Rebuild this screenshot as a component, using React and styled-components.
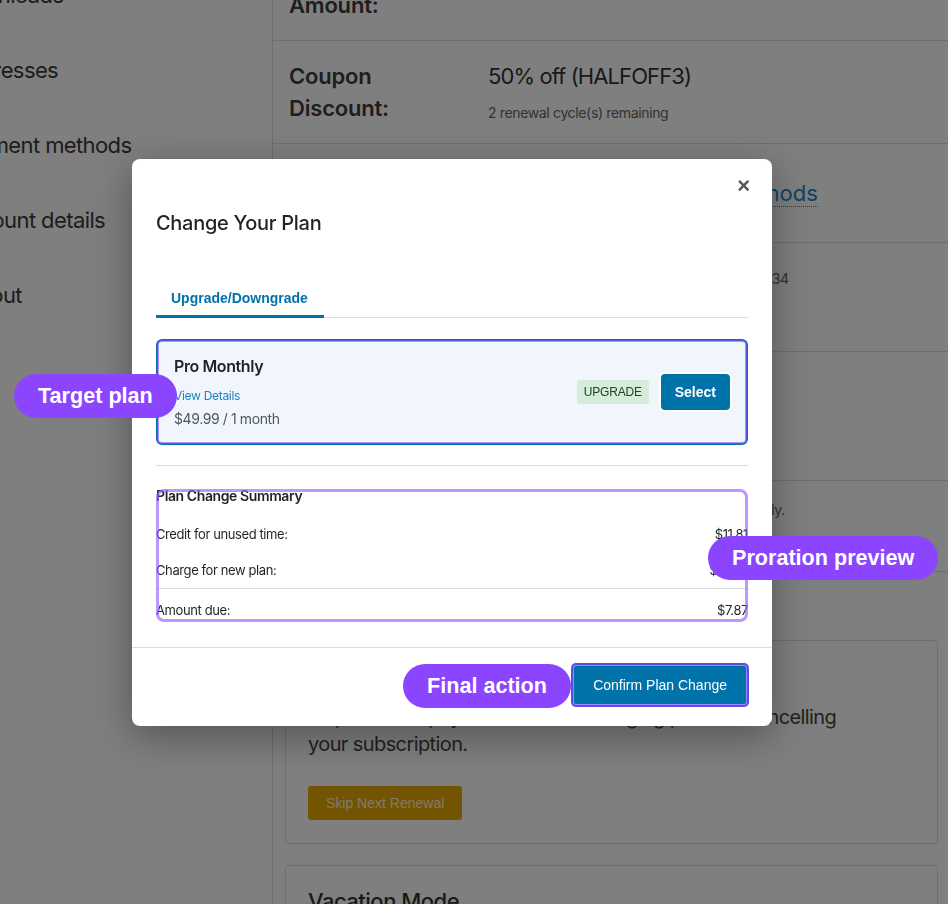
import styled, { createGlobalStyle } from "styled-components";

const GlobalStyle = createGlobalStyle`
  html, body {
    margin: 0;
    padding: 0;
    background: #fff;
    overflow: hidden;
  }
  body {
    font-family: Inter, "Noto Sans", sans-serif;
    color: #333;
  }
  * {
    box-sizing: border-box;
  }
`;

/* ---------- page behind the dialog ---------- */

const Page = styled.div`
  display: flex;
  margin: -62px 0 0 -47px;
  min-height: 1040px;
`;

const Sidebar = styled.nav`
  width: 320px;
  flex-shrink: 0;
  border-right: 1px solid #dcdcdc;
  padding-top: 20px;
`;

const NavItem = styled.div`
  font-size: 22px;
  line-height: 75px;
  color: #3a3a3a;
  letter-spacing: -0.6px;
  white-space: nowrap;
`;

const Main = styled.main`
  flex: 1;
  min-width: 0;
`;

const Row = styled.div`
  display: grid;
  grid-template-columns: 199px 1fr;
  align-items: center;
  padding: ${(p) => p.$pad || 19}px 0 ${(p) => p.$pad || 19}px 16px;
  border-bottom: 1px solid #dcdcdc;
`;

const Label = styled.div`
  font-size: 22px;
  line-height: 32px;
  font-weight: 600;
  color: #3c3c3c;
  letter-spacing: -0.2px;
`;

const Value = styled.div`
  font-size: 22px;
  line-height: ${(p) => p.$lh || 28}px;
  color: #333;
  white-space: nowrap;
  letter-spacing: -0.9px;
`;

const Small = styled.div`
  font-size: 14px;
  line-height: ${(p) => p.$lh || 20}px;
  margin-top: ${(p) => p.$mt || 0}px;
  color: #666;
  white-space: nowrap;
  letter-spacing: -0.35px;
`;

const PageLink = styled.a`
  color: #1a8ad0;
  text-decoration: none;
  letter-spacing: 0;
  border-bottom: 1px dotted #1a8ad0;
`;

const Card = styled.section`
  margin: ${(p) => p.$mt || 0}px 10px 0 12px;
  border: 1px solid #dcdcdc;
  border-radius: 4px;
  padding: ${(p) => p.$pt || 22}px 22px 23px;
`;

const CardTitle = styled.h3`
  margin: 0 0 11px;
  font-size: 22px;
  line-height: 30px;
  font-weight: 500;
  color: #333;
  letter-spacing: -0.5px;
`;

const CardText = styled.p`
  margin: 0;
  max-width: 560px;
  font-size: 20px;
  line-height: 27px;
  color: #444;
  letter-spacing: -0.6px;
`;

const SkipButton = styled.button`
  margin-top: 28px;
  height: 34px;
  padding: 0 18px;
  border: 0;
  border-radius: 3px;
  background: #e6a800;
  color: #fff6dc;
  font: 14px "Liberation Sans", Arial, sans-serif;
`;

const Overlay = styled.div`
  position: fixed;
  inset: 0;
  background: rgba(0, 0, 0, 0.5);
  z-index: 10;
`;

/* ---------- dialog ---------- */

const Modal = styled.div`
  position: fixed;
  top: 159px;
  left: 132px;
  width: 640px;
  background: #fff;
  border-radius: 8px;
  box-shadow: 0 10px 40px rgba(0, 0, 0, 0.35);
  z-index: 20;
  color: #1d2327;
`;

const ModalBody = styled.div`
  padding: 16px 24px 28px;
`;

const CloseRow = styled.div`
  display: flex;
  justify-content: flex-end;
`;

const CloseButton = styled.button`
  border: 0;
  background: none;
  padding: 0;
  margin-right: -2px;
  font: 700 22px/22px "Liberation Sans", Arial, sans-serif;
  color: #50575e;
`;

const Title = styled.h2`
  margin: 14px 0 0;
  font-size: 20px;
  line-height: 24px;
  font-weight: 500;
  letter-spacing: -0.3px;
`;

const TabBar = styled.div`
  display: flex;
  margin-top: 43px;
  border-bottom: 1px solid #dcdcde;
`;

const Tab = styled.div`
  padding: 12px 16px 8px 15px;
  margin-bottom: -1px;
  font: 700 14px/17px "Liberation Sans", Arial, sans-serif;
  color: #0073aa;
  border-bottom: 3px solid #0073aa;
`;

const PlanCard = styled.div`
  margin-top: 21px;
  display: flex;
  align-items: center;
  justify-content: space-between;
  padding: 15px 16px;
  background: #f0f6fc;
  border: 2px solid #0073aa;
  border-radius: 6px;
  outline: 2px solid rgba(139, 69, 255, 0.55);
  outline-offset: -3px;
`;

const PlanInfo = styled.div`
  display: flex;
  flex-direction: column;
`;

const PlanName = styled.div`
  font-size: 16px;
  line-height: 20px;
  font-weight: 600;
  letter-spacing: -0.4px;
`;

const DetailsLink = styled.a`
  margin-top: 12px;
  font-size: 12px;
  line-height: 16px;
  color: #2382c4;
  text-decoration: none;
  letter-spacing: -0.3px;
`;

const Price = styled.div`
  margin-top: 6px;
  font-size: 14px;
  line-height: 18px;
  color: #50575e;
  letter-spacing: -0.4px;
`;

const PlanActions = styled.div`
  display: flex;
  align-items: center;
  gap: 12px;
`;

const Badge = styled.span`
  height: 24px;
  padding: 0 7px;
  border-radius: 3px;
  background: #d5ecdb;
  color: #1e4620;
  font: 12px/24px "Liberation Sans", Arial, sans-serif;
  letter-spacing: -0.2px;
`;

const SelectButton = styled.button`
  height: 36px;
  padding: 0 14px;
  border: 0;
  border-radius: 4px;
  background: #0073aa;
  color: #fff;
  font: 700 14px "Liberation Sans", Arial, sans-serif;
  box-shadow: 0 0 0 2px #fff;
`;

const Divider = styled.hr`
  margin: 20px 0 0;
  border: 0;
  border-top: 1px solid #dcdcde;
`;

const Summary = styled.div`
  position: relative;
  padding-top: 21px;

  &::after {
    content: "";
    position: absolute;
    top: 23px;
    left: 0;
    right: 0;
    bottom: -3px;
    border: 3px solid rgba(150, 95, 255, 0.65);
    border-radius: 8px;
  }
`;

const SummaryTitle = styled.div`
  margin-bottom: 11px;
  font-size: 14px;
  line-height: 18px;
  font-weight: 600;
  letter-spacing: -0.4px;
`;

const SummaryRow = styled.div`
  display: flex;
  justify-content: space-between;
  padding: ${(p) => (p.$total ? "12px 0 0" : "9px 0")};
  border-bottom: ${(p) => (p.$rule ? "1px solid #dcdcde" : "0")};
  font-size: 13px;
  line-height: 18px;
  letter-spacing: -0.4px;
`;

const Footer = styled.div`
  display: flex;
  justify-content: flex-end;
  padding: 18px 26px 22px;
  border-top: 1px solid #dcdcde;
`;

const ConfirmButton = styled.button`
  height: 38px;
  padding: 0 19px;
  border: 0;
  border-radius: 2px;
  background: #0073aa;
  color: #fff;
  font: 14px "Liberation Sans", Arial, sans-serif;
  box-shadow: 0 0 0 1px #9a86ff, 0 0 0 3px #5b4de3;
`;

/* ---------- callouts ---------- */

const Pill = styled.div`
  position: fixed;
  top: ${(p) => p.$top}px;
  left: ${(p) => p.$left}px;
  height: 44px;
  padding: 0 24px;
  border-radius: 22px;
  background: #8b45ff;
  color: #fff;
  font: 700 21.6px/44px "Liberation Sans", Arial, sans-serif;
  white-space: nowrap;
  z-index: 30;
`;

export default function App() {
  return (
    <>
      <GlobalStyle />
      <Page>
        <Sidebar>
          <NavItem>Downloads</NavItem>
          <NavItem>Addresses</NavItem>
          <NavItem>Payment methods</NavItem>
          <NavItem>Account details</NavItem>
          <NavItem>Logout</NavItem>
        </Sidebar>
        <Main>
          <Row>
            <Label>
              Renewal
              <br />
              Amount:
            </Label>
            <Value>(was $49.99)</Value>
          </Row>
          <Row>
            <Label>
              Coupon
              <br />
              Discount:
            </Label>
            <div>
              <Value>50% off (HALFOFF3)</Value>
              <Small $mt={13}>2 renewal cycle(s) remaining</Small>
            </div>
          </Row>
          <Row $pad={17}>
            <Label>
              Payment
              <br />
              Method:
            </Label>
            <Value>
              <PageLink>Manage your payment methods</PageLink>
            </Value>
          </Row>
          <Row>
            <Label>Card:</Label>
            <div>
              <Small $lh={34}>Visa ending in 4242 — Card expires on 12/2034</Small>
              <Small $lh={18}>Billing address on file</Small>
              <Small $lh={18}>Default card</Small>
            </div>
          </Row>
          <Row>
            <Label>
              Shipping
              <br />
              Address:
            </Label>
            <div>
              <Value $lh={30}>Jane Doe</Value>
              <Value $lh={30}>123 Main Street</Value>
              <Value $lh={30}>Springfield, IL</Value>
            </div>
          </Row>
          <Row>
            <Label>Status:</Label>
            <div>
              <Small>Your subscription will now renew automatically.</Small>
              <Value $lh={32}>Active</Value>
            </div>
          </Row>
          <Card $mt={68}>
            <CardTitle>Skip a Renewal</CardTitle>
            <CardText>
              Skip the next payment without changing plans or cancelling your
              subscription.
            </CardText>
            <SkipButton>Skip Next Renewal</SkipButton>
          </Card>
          <Card $mt={21} $pt={20}>
            <CardTitle>Vacation Mode</CardTitle>
          </Card>
        </Main>
      </Page>

      <Overlay />

      <Modal>
        <ModalBody>
          <CloseRow>
            <CloseButton aria-label="Close">×</CloseButton>
          </CloseRow>
          <Title>Change Your Plan</Title>
          <TabBar>
            <Tab>Upgrade/Downgrade</Tab>
          </TabBar>
          <PlanCard>
            <PlanInfo>
              <PlanName>Pro Monthly</PlanName>
              <DetailsLink>View Details</DetailsLink>
              <Price>$49.99 / 1 month</Price>
            </PlanInfo>
            <PlanActions>
              <Badge>UPGRADE</Badge>
              <SelectButton>Select</SelectButton>
            </PlanActions>
          </PlanCard>
          <Divider />
          <Summary>
            <SummaryTitle>Plan Change Summary</SummaryTitle>
            <SummaryRow>
              <span>Credit for unused time:</span>
              <span>$11.81</span>
            </SummaryRow>
            <SummaryRow $rule>
              <span>Charge for new plan:</span>
              <span>$19.68</span>
            </SummaryRow>
            <SummaryRow $total>
              <span>Amount due:</span>
              <span>$7.87</span>
            </SummaryRow>
          </Summary>
        </ModalBody>
        <Footer>
          <ConfirmButton>Confirm Plan Change</ConfirmButton>
        </Footer>
      </Modal>

      <Pill $top={374} $left={14}>Target plan</Pill>
      <Pill $top={536} $left={708}>Proration preview</Pill>
      <Pill $top={664} $left={403}>Final action</Pill>
    </>
  );
}
